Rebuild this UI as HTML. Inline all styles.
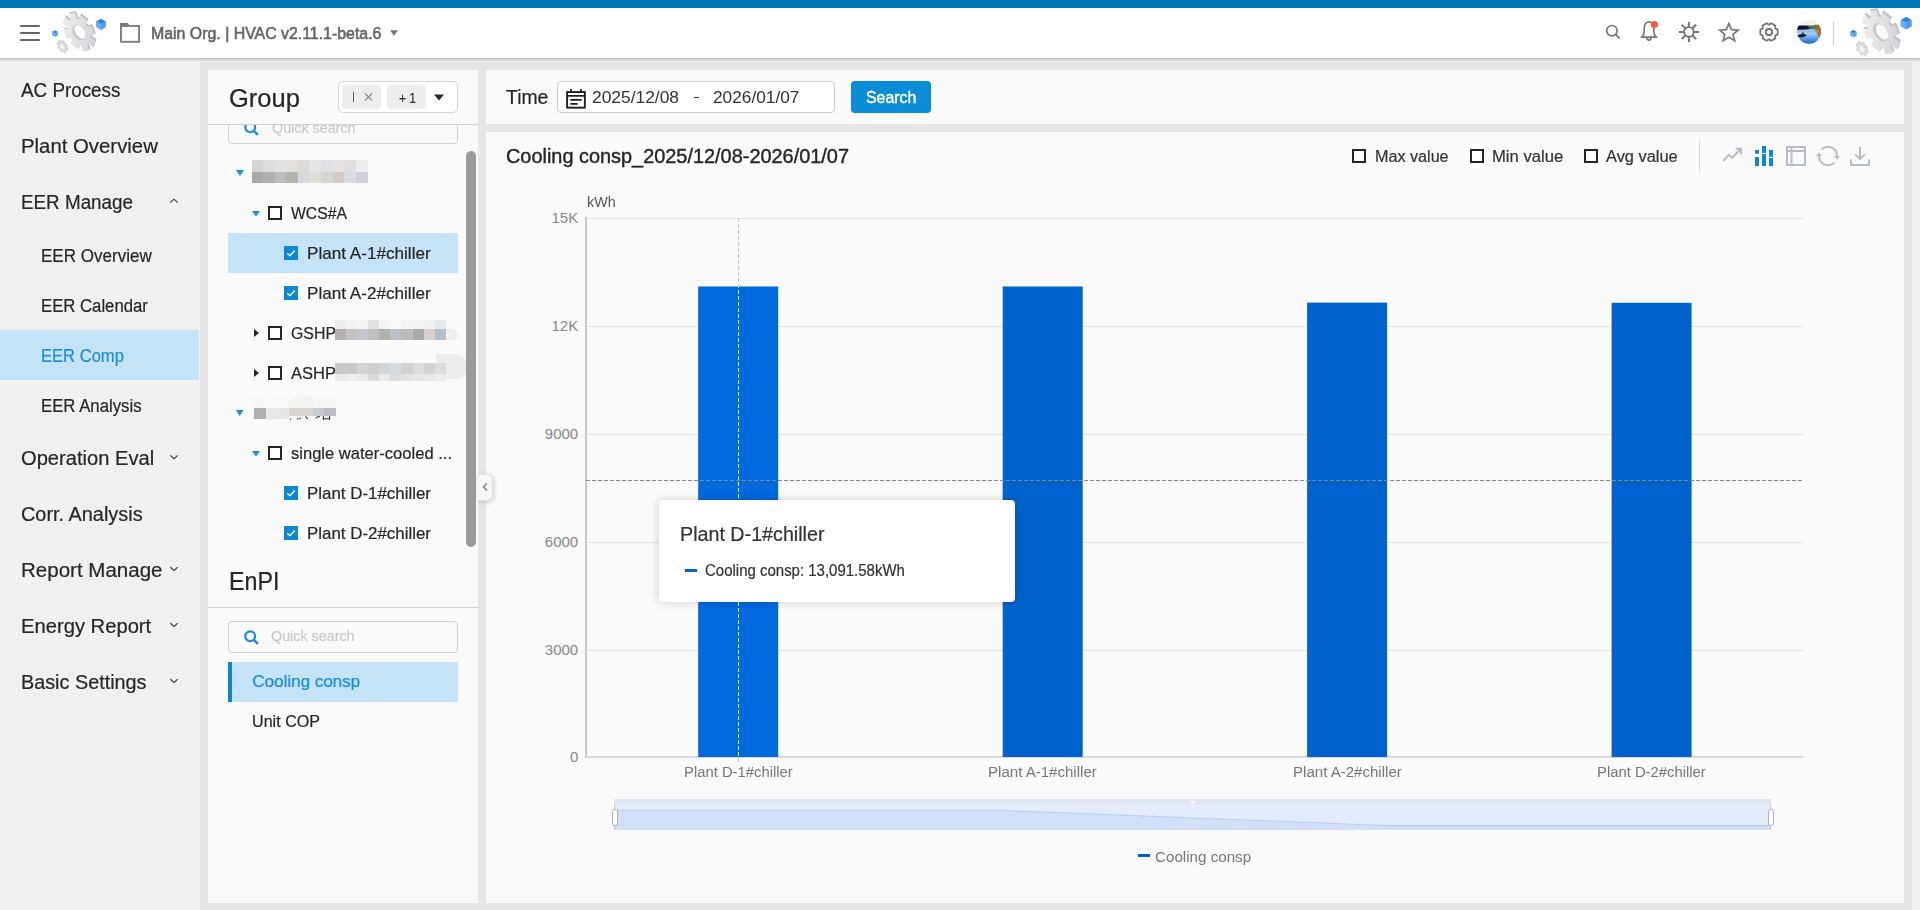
<!DOCTYPE html>
<html><head><meta charset="utf-8"><title>EER Comp</title>
<style>
html,body{margin:0;padding:0;width:1920px;height:910px;overflow:hidden;background:#e5e5e5;}
body{position:relative;font-family:"Liberation Sans",sans-serif;}
.t{position:absolute;white-space:nowrap;line-height:1;transform-origin:0 0;-webkit-text-stroke:0.2px currentColor;}
.r{position:absolute;}
svg.r{display:block;}
</style></head><body>
<div class="r" style="left:0px;top:0px;width:1920px;height:8px;background:#0077b7;"></div>
<div class="r" style="left:0px;top:8px;width:1920px;height:50px;background:#ffffff;"></div>
<div class="r" style="left:0px;top:58px;width:1920px;height:1px;background:#c2c2c2;"></div>
<div class="r" style="left:0px;top:59px;width:1920px;height:1px;background:#d2d2d2;"></div>
<div class="r" style="left:0px;top:60px;width:1920px;height:1px;background:#dbdbdb;"></div>
<div class="r" style="left:0px;top:61px;width:1920px;height:1px;background:#ebebeb;"></div>
<div class="r" style="left:20px;top:24.6px;width:20px;height:2.4px;background:#666666;border-radius:1.2px;"></div>
<div class="r" style="left:20px;top:31.6px;width:20px;height:2.4px;background:#666666;border-radius:1.2px;"></div>
<div class="r" style="left:20px;top:38.6px;width:20px;height:2.4px;background:#666666;border-radius:1.2px;"></div>
<svg class="r" style="left:52px;top:12px;width:54.00px;height:42.00px;overflow:visible" viewBox="0 0 54 42">
<defs>
<linearGradient id="gga" x1="0" y1="0" x2="0.8" y2="1"><stop offset="0" stop-color="#f1f1f1"/><stop offset="0.55" stop-color="#e2e2e4"/><stop offset="1" stop-color="#cdd0d4"/></linearGradient>
</defs>
<g transform="rotate(-33 27.0 20.2)">
<path d="M38.74,19.42 L42.58,20.61 L40.61,30.47 L37.01,28.08 L35.81,30.31 L37.99,35.36 L32.11,40.18 L30.65,34.54 L28.78,34.81 L28.02,40.77 L21.66,37.72 L23.20,32.13 L21.76,30.28 L18.51,33.65 L15.40,24.53 L19.04,22.26 L18.86,19.38 L15.02,18.19 L16.99,8.33 L20.59,10.72 L21.79,8.49 L19.61,3.44 L25.49,-1.38 L26.95,4.26 L28.82,3.99 L29.58,-1.97 L35.94,1.08 L34.40,6.67 L35.84,8.52 L39.09,5.15 L42.20,14.27 L38.56,16.54Z" fill="#b9c0c6"/>
<path d="M36.94,20.22 L40.78,21.41 L38.81,31.27 L35.21,28.88 L34.01,31.11 L36.19,36.16 L30.31,40.98 L28.85,35.34 L26.98,35.61 L26.22,41.57 L19.86,38.52 L21.40,32.93 L19.96,31.08 L16.71,34.45 L13.60,25.33 L17.24,23.06 L17.06,20.18 L13.22,18.99 L15.19,9.13 L18.79,11.52 L19.99,9.29 L17.81,4.24 L23.69,-0.58 L25.15,5.06 L27.02,4.79 L27.78,-1.17 L34.14,1.88 L32.60,7.47 L34.04,9.32 L37.29,5.95 L40.40,15.07 L36.76,17.34Z" fill="url(#gga)"/>
<ellipse cx="26.7" cy="20.2" rx="5.6" ry="8.6" fill="#c4c9ce"/>
<ellipse cx="27.9" cy="20.5" rx="4.4" ry="7.4" fill="#fbfbfb"/>
</g>
<g transform="rotate(-33 10.2 35.0)">
<path d="M14.40,34.33 L15.60,34.59 L15.21,37.53 L14.03,37.05 L13.57,38.09 L14.30,39.57 L12.66,41.23 L12.05,39.63 L11.24,39.87 L11.07,41.70 L9.14,41.10 L9.46,39.32 L8.77,38.61 L7.80,39.73 L6.71,37.23 L7.76,36.30 L7.60,35.07 L6.40,34.81 L6.79,31.87 L7.97,32.35 L8.43,31.31 L7.70,29.83 L9.34,28.17 L9.95,29.77 L10.76,29.53 L10.93,27.70 L12.86,28.30 L12.54,30.08 L13.23,30.79 L14.20,29.67 L15.29,32.17 L14.24,33.10Z" fill="#bcc0c5"/>
<path d="M13.60,34.63 L14.80,34.89 L14.41,37.83 L13.23,37.35 L12.77,38.39 L13.50,39.87 L11.86,41.53 L11.25,39.93 L10.44,40.17 L10.27,42.00 L8.34,41.40 L8.66,39.62 L7.97,38.91 L7.00,40.03 L5.91,37.53 L6.96,36.60 L6.80,35.37 L5.60,35.11 L5.99,32.17 L7.17,32.65 L7.63,31.61 L6.90,30.13 L8.54,28.47 L9.15,30.07 L9.96,29.83 L10.13,28.00 L12.06,28.60 L11.74,30.38 L12.43,31.09 L13.40,29.97 L14.49,32.47 L13.44,33.40Z" fill="#dcdcdf"/>
<ellipse cx="10.5" cy="35.0" rx="1.7" ry="2.9" fill="#f6f6f6"/>
</g>
<path d="M49.00,6.70 L53.85,9.50 L49.00,12.30 L44.15,9.50Z" fill="#2a86f2"/><path d="M44.15,9.50 L49.00,12.30 L49.00,17.90 L44.15,15.10Z" fill="#62a9f6"/><path d="M53.85,9.50 L49.00,12.30 L49.00,17.90 L53.85,15.10Z" fill="#4a9af4"/>
<path d="M3.00,18.20 L5.86,19.85 L3.00,21.50 L0.14,19.85Z" fill="#2a86f2"/><path d="M0.14,19.85 L3.00,21.50 L3.00,24.80 L0.14,23.15Z" fill="#62a9f6"/><path d="M5.86,19.85 L3.00,21.50 L3.00,24.80 L5.86,23.15Z" fill="#4a9af4"/>
</svg>
<svg class="r" style="left:118px;top:21px;width:24px;height:24px" viewBox="0 0 24 24"><rect x="2.95" y="4.95" width="18.1" height="15.85" fill="none" stroke="#7c7c7c" stroke-width="1.9"/><path d="M2,2.1 H9.7 L11.6,4.2 H2z" fill="#7c7c7c"/></svg><div class="t" style="left:150.60px;top:25.31px;font-size:17px;color:#666666;transform:scaleX(0.9342);-webkit-text-stroke:0.6px #666;">Main Org. | HVAC v2.11.1-beta.6</div>
<svg class="r" style="left:389px;top:29px;width:10px;height:8px" viewBox="0 0 10 8"><path d="M1,1.2 h8 l-4,5.6z" fill="#777"/></svg>
<svg class="r" style="left:1600px;top:18px;width:240px;height:30px" viewBox="1600 18 240 30">
<g fill="none" stroke="#777777" stroke-width="1.7">
<circle cx="1611.9" cy="30.7" r="5.2"/><path d="M1615.6,34.4 L1619.8,38.6"/>
<path d="M1642,37.1 h14 c-1.6,-1.8 -2.1,-3.3 -2.2,-5.6 v-3.6 c0,-3.6 -2.4,-6 -4.8,-6 c-2.4,0 -4.8,2.4 -4.8,6 v3.6 c0,2.3 -0.6,3.8 -2.2,5.6z"/>
<path d="M1646.7,37.3 c0.3,2 1.2,2.8 2.3,2.8 c1.1,0 2,-0.8 2.3,-2.8"/>
<circle cx="1688.9" cy="31.9" r="4.8" stroke-width="1.9"/>
<path d="M1694.10,31.90 L1699.10,31.90 M1692.58,35.58 L1696.11,39.11 M1688.90,37.10 L1688.90,42.10 M1685.22,35.58 L1681.69,39.11 M1683.70,31.90 L1678.70,31.90 M1685.22,28.22 L1681.69,24.69 M1688.90,26.70 L1688.90,21.70 M1692.58,28.22 L1696.11,24.69" stroke-width="2"/>
<path d="M1728.9,23.6 l2.6,6.1 l6.6,0.4 l-5.1,4.3 l1.7,6.4 l-5.8,-3.5 l-5.8,3.5 l1.7,-6.4 l-5.1,-4.3 l6.6,-0.4z" stroke-linejoin="miter"/>
<circle cx="1768.9" cy="32" r="3.1"/>
</g>
<circle cx="1654.4" cy="24.5" r="3.6" fill="#f25c3c"/>
<path d="M1833.5,21 v24" stroke="#cfcfcf" stroke-width="1.2"/>
</svg>
<svg class="r" style="left:1750px;top:14px;width:40px;height:40px" viewBox="1750 14 40 40"><path d="M1775.59,28.64 L1777.69,29.67 L1777.69,34.33 L1775.59,35.36 L1775.21,36.03 L1775.36,38.36 L1771.33,40.69 L1769.39,39.39 L1768.61,39.39 L1766.67,40.69 L1762.64,38.36 L1762.79,36.03 L1762.41,35.36 L1760.31,34.33 L1760.31,29.67 L1762.41,28.64 L1762.79,27.97 L1762.64,25.64 L1766.67,23.31 L1768.61,24.61 L1769.39,24.61 L1771.33,23.31 L1775.36,25.64 L1775.21,27.97Z" fill="none" stroke="#777777" stroke-width="1.8" stroke-linejoin="round"/><circle cx="1769" cy="32" r="3.1" fill="none" stroke="#777777" stroke-width="1.8"/></svg>
<svg class="r" style="left:1797px;top:20px;width:24px;height:24px" viewBox="0 0 24 24">
<defs><clipPath id="av"><circle cx="12" cy="11.8" r="12"/></clipPath>
<linearGradient id="wat" x1="0" y1="0" x2="0" y2="1"><stop offset="0" stop-color="#7fb0ee"/><stop offset="0.35" stop-color="#a9cbf5"/><stop offset="0.7" stop-color="#4f94e6"/><stop offset="1" stop-color="#0b5fc6"/></linearGradient></defs>
<g clip-path="url(#av)">
<rect x="0" y="0" width="24" height="24" fill="#f2f2f2"/>
<rect x="0" y="8" width="24" height="16" fill="url(#wat)"/>
<path d="M0,5.6 H11 L13,8.8 L9,9.6 L0,9.8z" fill="#161616"/>
<path d="M10,5.4 H18 V8.6 L13,9 z" fill="#4f6b3d"/>
<path d="M17,4.8 H24 V17.5 L21.5,16.5 L19.5,12.5 L18,9z" fill="#7d7a34"/>
<circle cx="20.2" cy="11.2" r="1.7" fill="#d08a25"/>
<circle cx="22.6" cy="14" r="1.4" fill="#c47a22"/>
<circle cx="19.2" cy="7.6" r="1.5" fill="#5a7530"/>
<path d="M0,15.8 L3,14.6 L5.2,13.6 L7.6,14 L9.8,15.6 L7.6,16.6 L5,17.6 L2,17z" fill="#1b1b1b"/>
<circle cx="6" cy="13" r="0.9" fill="#3d4d52"/>
</g></svg>
<svg class="r" style="left:1850px;top:9px;width:61.88px;height:48.13px;overflow:visible" viewBox="0 0 54 42">
<defs>
<linearGradient id="ggb" x1="0" y1="0" x2="0.8" y2="1"><stop offset="0" stop-color="#f1f1f1"/><stop offset="0.55" stop-color="#e2e2e4"/><stop offset="1" stop-color="#cdd0d4"/></linearGradient>
</defs>
<g transform="rotate(-33 27.0 20.2)">
<path d="M38.74,19.42 L42.58,20.61 L40.61,30.47 L37.01,28.08 L35.81,30.31 L37.99,35.36 L32.11,40.18 L30.65,34.54 L28.78,34.81 L28.02,40.77 L21.66,37.72 L23.20,32.13 L21.76,30.28 L18.51,33.65 L15.40,24.53 L19.04,22.26 L18.86,19.38 L15.02,18.19 L16.99,8.33 L20.59,10.72 L21.79,8.49 L19.61,3.44 L25.49,-1.38 L26.95,4.26 L28.82,3.99 L29.58,-1.97 L35.94,1.08 L34.40,6.67 L35.84,8.52 L39.09,5.15 L42.20,14.27 L38.56,16.54Z" fill="#b9c0c6"/>
<path d="M36.94,20.22 L40.78,21.41 L38.81,31.27 L35.21,28.88 L34.01,31.11 L36.19,36.16 L30.31,40.98 L28.85,35.34 L26.98,35.61 L26.22,41.57 L19.86,38.52 L21.40,32.93 L19.96,31.08 L16.71,34.45 L13.60,25.33 L17.24,23.06 L17.06,20.18 L13.22,18.99 L15.19,9.13 L18.79,11.52 L19.99,9.29 L17.81,4.24 L23.69,-0.58 L25.15,5.06 L27.02,4.79 L27.78,-1.17 L34.14,1.88 L32.60,7.47 L34.04,9.32 L37.29,5.95 L40.40,15.07 L36.76,17.34Z" fill="url(#ggb)"/>
<ellipse cx="26.7" cy="20.2" rx="5.6" ry="8.6" fill="#c4c9ce"/>
<ellipse cx="27.9" cy="20.5" rx="4.4" ry="7.4" fill="#fbfbfb"/>
</g>
<g transform="rotate(-33 10.2 35.0)">
<path d="M14.40,34.33 L15.60,34.59 L15.21,37.53 L14.03,37.05 L13.57,38.09 L14.30,39.57 L12.66,41.23 L12.05,39.63 L11.24,39.87 L11.07,41.70 L9.14,41.10 L9.46,39.32 L8.77,38.61 L7.80,39.73 L6.71,37.23 L7.76,36.30 L7.60,35.07 L6.40,34.81 L6.79,31.87 L7.97,32.35 L8.43,31.31 L7.70,29.83 L9.34,28.17 L9.95,29.77 L10.76,29.53 L10.93,27.70 L12.86,28.30 L12.54,30.08 L13.23,30.79 L14.20,29.67 L15.29,32.17 L14.24,33.10Z" fill="#bcc0c5"/>
<path d="M13.60,34.63 L14.80,34.89 L14.41,37.83 L13.23,37.35 L12.77,38.39 L13.50,39.87 L11.86,41.53 L11.25,39.93 L10.44,40.17 L10.27,42.00 L8.34,41.40 L8.66,39.62 L7.97,38.91 L7.00,40.03 L5.91,37.53 L6.96,36.60 L6.80,35.37 L5.60,35.11 L5.99,32.17 L7.17,32.65 L7.63,31.61 L6.90,30.13 L8.54,28.47 L9.15,30.07 L9.96,29.83 L10.13,28.00 L12.06,28.60 L11.74,30.38 L12.43,31.09 L13.40,29.97 L14.49,32.47 L13.44,33.40Z" fill="#dcdcdf"/>
<ellipse cx="10.5" cy="35.0" rx="1.7" ry="2.9" fill="#f6f6f6"/>
</g>
<path d="M49.00,6.70 L53.85,9.50 L49.00,12.30 L44.15,9.50Z" fill="#2a86f2"/><path d="M44.15,9.50 L49.00,12.30 L49.00,17.90 L44.15,15.10Z" fill="#62a9f6"/><path d="M53.85,9.50 L49.00,12.30 L49.00,17.90 L53.85,15.10Z" fill="#4a9af4"/>
<path d="M3.00,18.20 L5.86,19.85 L3.00,21.50 L0.14,19.85Z" fill="#2a86f2"/><path d="M0.14,19.85 L3.00,21.50 L3.00,24.80 L0.14,23.15Z" fill="#62a9f6"/><path d="M5.86,19.85 L3.00,21.50 L3.00,24.80 L5.86,23.15Z" fill="#4a9af4"/>
</svg>
<div class="r" style="left:0px;top:62px;width:200px;height:848px;background:#f0f0f0;"></div>
<div class="r" style="left:200px;top:62px;width:1712px;height:848px;background:#e5e5e5;"></div>
<div class="r" style="left:1912px;top:62px;width:8px;height:848px;background:#efefef;"></div>
<div class="r" style="left:208px;top:70px;width:270px;height:833px;background:#fafafa;"></div>
<div class="r" style="left:486px;top:70px;width:1418px;height:54px;background:#fafafa;"></div>
<div class="r" style="left:486px;top:132px;width:1418px;height:771px;background:#fafafa;"></div>
<div class="r" style="left:0px;top:330px;width:199px;height:50px;background:#c4e3f7;"></div>
<div class="t" style="left:20.60px;top:80.07px;font-size:20px;color:#262626;transform:scaleX(0.9413);">AC Process</div>
<div class="t" style="left:20.60px;top:135.67px;font-size:20px;color:#262626;transform:scaleX(1.0175);">Plant Overview</div>
<div class="t" style="left:20.60px;top:192.07px;font-size:20px;color:#262626;transform:scaleX(0.9416);">EER Manage</div>
<svg class="r" style="left:0;top:0;width:200px;height:910px;overflow:visible" viewBox="0 0 200 910"><path d="M170.3,202.6 L174,199.2 L177.8,202.6" fill="none" stroke="#333" stroke-width="1.05"/></svg>
<div class="t" style="left:40.70px;top:247.36px;font-size:18px;color:#262626;transform:scaleX(0.9471);">EER Overview</div>
<div class="t" style="left:40.70px;top:296.76px;font-size:18px;color:#262626;transform:scaleX(0.9290);">EER Calendar</div>
<div class="t" style="left:40.70px;top:346.76px;font-size:18px;color:#1a8cd8;transform:scaleX(0.9207);">EER Comp</div>
<div class="t" style="left:40.70px;top:396.96px;font-size:18px;color:#262626;transform:scaleX(0.9302);">EER Analysis</div>
<div class="t" style="left:20.60px;top:448.07px;font-size:20px;color:#262626;transform:scaleX(1.0068);">Operation Eval</div>
<svg class="r" style="left:0;top:0;width:200px;height:910px;overflow:visible" viewBox="0 0 200 910"><path d="M170.3,455.3 L174,458.7 L177.7,455.3" fill="none" stroke="#333" stroke-width="1.05"/></svg>
<div class="t" style="left:20.60px;top:503.87px;font-size:20px;color:#262626;transform:scaleX(0.9947);">Corr. Analysis</div>
<div class="t" style="left:20.60px;top:559.87px;font-size:20px;color:#262626;transform:scaleX(1.0265);">Report Manage</div>
<svg class="r" style="left:0;top:0;width:200px;height:910px;overflow:visible" viewBox="0 0 200 910"><path d="M170.3,567.1 L174,570.5 L177.7,567.1" fill="none" stroke="#333" stroke-width="1.05"/></svg>
<div class="t" style="left:20.60px;top:615.87px;font-size:20px;color:#262626;transform:scaleX(1.0097);">Energy Report</div>
<svg class="r" style="left:0;top:0;width:200px;height:910px;overflow:visible" viewBox="0 0 200 910"><path d="M170.3,623.1 L174,626.5 L177.7,623.1" fill="none" stroke="#333" stroke-width="1.05"/></svg>
<div class="t" style="left:20.60px;top:671.87px;font-size:20px;color:#262626;transform:scaleX(0.9901);">Basic Settings</div>
<svg class="r" style="left:0;top:0;width:200px;height:910px;overflow:visible" viewBox="0 0 200 910"><path d="M170.3,679.1 L174,682.5 L177.7,679.1" fill="none" stroke="#333" stroke-width="1.05"/></svg>
<div class="t" style="left:229.00px;top:85.84px;font-size:25px;color:#262626;transform:scaleX(1.0216);">Group</div>
<div class="r" style="left:338px;top:81px;width:120px;height:32px;background:#ffffff;border:1px solid #d4d4d4;border-radius:5px;box-sizing:border-box;"></div>
<div class="r" style="left:342px;top:85px;width:39px;height:24px;background:#ededed;border-radius:4px;"></div>
<div class="r" style="left:387px;top:85px;width:39px;height:24px;background:#ededed;border-radius:4px;"></div>
<div class="r" style="left:353px;top:91.5px;width:1.3px;height:10px;background:#555;"></div>
<svg class="r" style="left:360.5px;top:90px;width:14px;height:14px" viewBox="0 0 14 14"><path d="M4,3.5 L11,10.5 M11,3.5 L4,10.5" stroke="#888" stroke-width="1.1"/></svg>
<div class="t" style="left:398.50px;top:89.90px;font-size:15px;color:#333;transform:scaleX(0.7995);">+ 1</div>
<svg class="r" style="left:432px;top:92px;width:14px;height:10px" viewBox="0 0 14 10"><path d="M2,2.6 h10 l-5,6z" fill="#2a2a2a"/></svg>
<div class="r" style="left:208px;top:124px;width:270px;height:1px;background:#d0d0d0;"></div>
<div class="r" style="left:208px;top:125px;width:270px;height:428px;overflow:hidden">
<div class="r" style="left:20px;top:-13px;width:230px;height:32px;background:transparent;border:1px solid #cfcfcf;border-radius:4px;box-sizing:border-box;"></div>
<svg class="r" style="left:35px;top:-5.5px;width:18px;height:18px" viewBox="0 0 18 18"><circle cx="7.2" cy="7.2" r="4.9" fill="none" stroke="#1a8cd8" stroke-width="2.2"/><path d="M10.8,10.8 L14.8,14.8" stroke="#1a8cd8" stroke-width="2.4"/></svg>
<div class="t" style="left:63.70px;top:-4.70px;font-size:15px;color:#c8c8c8;transform:scaleX(0.9540);">Quick search</div>
<div class="r" style="left:20px;top:108px;width:230px;height:40px;background:#c4e3f7;"></div>
<svg class="r" style="left:28px;top:45px;width:8px;height:6px" viewBox="0 0 8 6"><path d="M0,0 H8 L4.0,6z" fill="#1a8cd8"/></svg>
<div class="r" style="left:43.5px;top:35px;width:11.9px;height:11.8px;background:#d4d4d4;filter:blur(0.3px);"></div>
<div class="r" style="left:55.1px;top:35px;width:11.9px;height:11.8px;background:#dcdcdc;filter:blur(0.3px);"></div>
<div class="r" style="left:66.7px;top:35px;width:11.9px;height:11.8px;background:#e0e0e0;filter:blur(0.3px);"></div>
<div class="r" style="left:78.3px;top:35px;width:11.9px;height:11.8px;background:#e2dfdd;filter:blur(0.3px);"></div>
<div class="r" style="left:89.9px;top:35px;width:11.9px;height:11.8px;background:#dddbda;filter:blur(0.3px);"></div>
<div class="r" style="left:101.5px;top:35px;width:11.9px;height:11.8px;background:#e4e5e5;filter:blur(0.3px);"></div>
<div class="r" style="left:113.1px;top:35px;width:11.9px;height:11.8px;background:#e0e0e2;filter:blur(0.3px);"></div>
<div class="r" style="left:124.7px;top:35px;width:11.9px;height:11.8px;background:#e5e2df;filter:blur(0.3px);"></div>
<div class="r" style="left:136.3px;top:35px;width:11.9px;height:11.8px;background:#e0dedf;filter:blur(0.3px);"></div>
<div class="r" style="left:147.9px;top:35px;width:11.9px;height:11.8px;background:#ebeeef;filter:blur(0.3px);"></div>
<div class="r" style="left:43.5px;top:46.5px;width:11.9px;height:11.8px;background:#a9a9a9;filter:blur(0.3px);"></div>
<div class="r" style="left:55.1px;top:46.5px;width:11.9px;height:11.8px;background:#b1b1b1;filter:blur(0.3px);"></div>
<div class="r" style="left:66.7px;top:46.5px;width:11.9px;height:11.8px;background:#bebdbd;filter:blur(0.3px);"></div>
<div class="r" style="left:78.3px;top:46.5px;width:11.9px;height:11.8px;background:#b2b4b0;filter:blur(0.3px);"></div>
<div class="r" style="left:89.9px;top:46.5px;width:11.9px;height:11.8px;background:#d6d8db;filter:blur(0.3px);"></div>
<div class="r" style="left:101.5px;top:46.5px;width:11.9px;height:11.8px;background:#e1ded8;filter:blur(0.3px);"></div>
<div class="r" style="left:113.1px;top:46.5px;width:11.9px;height:11.8px;background:#d3d6d3;filter:blur(0.3px);"></div>
<div class="r" style="left:124.7px;top:46.5px;width:11.9px;height:11.8px;background:#d3ccc6;filter:blur(0.3px);"></div>
<div class="r" style="left:136.3px;top:46.5px;width:11.9px;height:11.8px;background:#d8dadd;filter:blur(0.3px);"></div>
<div class="r" style="left:147.9px;top:46.5px;width:11.9px;height:11.8px;background:#cfd0d5;filter:blur(0.3px);"></div>
<svg class="r" style="left:44px;top:85.5px;width:8px;height:5.5px" viewBox="0 0 8 5.5"><path d="M0,0 H8 L4.0,5.5z" fill="#1a8cd8"/></svg>
<div class="r" style="left:60px;top:81px;width:14px;height:14px;background:#ffffff;border:2px solid #262626;box-sizing:border-box;"></div>
<div class="t" style="left:82.50px;top:79.81px;font-size:17px;color:#262626;transform:scaleX(0.9260);">WCS#A</div>
<div class="r" style="left:76px;top:121px;width:14px;height:14px;background:#0a88d6;"></div>
<svg class="r" style="left:76px;top:121px;width:14px;height:14px" viewBox="0 0 14 14"><path d="M3.3,7.2 L6,9.8 L10.8,4.6" fill="none" stroke="#fff" stroke-width="1.5"/></svg>
<div class="t" style="left:98.80px;top:119.91px;font-size:17px;color:#262626;transform:scaleX(1.0068);">Plant A-1#chiller</div>
<div class="r" style="left:76px;top:161px;width:14px;height:14px;background:#0a88d6;"></div>
<svg class="r" style="left:76px;top:161px;width:14px;height:14px" viewBox="0 0 14 14"><path d="M3.3,7.2 L6,9.8 L10.8,4.6" fill="none" stroke="#fff" stroke-width="1.5"/></svg>
<div class="t" style="left:98.80px;top:159.91px;font-size:17px;color:#262626;transform:scaleX(1.0068);">Plant A-2#chiller</div>
<svg class="r" style="left:46px;top:204px;width:5px;height:8px" viewBox="0 0 5 8"><path d="M0,0 L5,4.0 L0,8z" fill="#262626"/></svg>
<div class="r" style="left:60px;top:201px;width:14px;height:14px;background:#ffffff;border:2px solid #262626;box-sizing:border-box;"></div>
<div class="t" style="left:82.50px;top:199.91px;font-size:17px;color:#262626;transform:scaleX(0.9337);">GSHP</div>
<div class="r" style="left:126.8px;top:194.6px;width:11.4px;height:9.4px;background:#ececee;filter:blur(0.3px);"></div>
<div class="r" style="left:137.9px;top:194.6px;width:11.4px;height:9.4px;background:#f2f2f2;filter:blur(0.3px);"></div>
<div class="r" style="left:149.0px;top:194.6px;width:11.4px;height:9.4px;background:#f5f5f5;filter:blur(0.3px);"></div>
<div class="r" style="left:160.1px;top:194.6px;width:11.4px;height:9.4px;background:#e0e0e0;filter:blur(0.3px);"></div>
<div class="r" style="left:171.2px;top:194.6px;width:11.4px;height:9.4px;background:#f5f5f5;filter:blur(0.3px);"></div>
<div class="r" style="left:182.3px;top:194.6px;width:11.4px;height:9.4px;background:#f8f8f6;filter:blur(0.3px);"></div>
<div class="r" style="left:193.4px;top:194.6px;width:11.4px;height:9.4px;background:#f3f3f3;filter:blur(0.3px);"></div>
<div class="r" style="left:204.5px;top:194.6px;width:11.4px;height:9.4px;background:#f3f3f3;filter:blur(0.3px);"></div>
<div class="r" style="left:215.6px;top:194.6px;width:11.4px;height:9.4px;background:#efefed;filter:blur(0.3px);"></div>
<div class="r" style="left:226.7px;top:194.6px;width:11.4px;height:9.4px;background:#e6e9ed;filter:blur(0.3px);"></div>
<div class="r" style="left:126.8px;top:203.7px;width:11.4px;height:11.3px;background:#b5b0b3;filter:blur(0.3px);"></div>
<div class="r" style="left:137.9px;top:203.7px;width:11.4px;height:11.3px;background:#c4c3c1;filter:blur(0.3px);"></div>
<div class="r" style="left:149.0px;top:203.7px;width:11.4px;height:11.3px;background:#c3c6ca;filter:blur(0.3px);"></div>
<div class="r" style="left:160.1px;top:203.7px;width:11.4px;height:11.3px;background:#bfbec0;filter:blur(0.3px);"></div>
<div class="r" style="left:171.2px;top:203.7px;width:11.4px;height:11.3px;background:#b0b0ad;filter:blur(0.3px);"></div>
<div class="r" style="left:182.3px;top:203.7px;width:11.4px;height:11.3px;background:#bdc0c5;filter:blur(0.3px);"></div>
<div class="r" style="left:193.4px;top:203.7px;width:11.4px;height:11.3px;background:#bdbcbb;filter:blur(0.3px);"></div>
<div class="r" style="left:204.5px;top:203.7px;width:11.4px;height:11.3px;background:#a9a9aa;filter:blur(0.3px);"></div>
<div class="r" style="left:215.6px;top:203.7px;width:11.4px;height:11.3px;background:#d5d0cc;filter:blur(0.3px);"></div>
<div class="r" style="left:226.7px;top:203.7px;width:11.4px;height:11.3px;background:#b5bfcc;filter:blur(0.3px);"></div>
<div class="r" style="left:238px;top:203.7px;width:12px;height:11px;background:#efeeec;border-radius:0 6px 6px 0;"></div>
<svg class="r" style="left:46px;top:244px;width:5px;height:8px" viewBox="0 0 5 8"><path d="M0,0 L5,4.0 L0,8z" fill="#262626"/></svg>
<div class="r" style="left:60px;top:241px;width:14px;height:14px;background:#ffffff;border:2px solid #262626;box-sizing:border-box;"></div>
<div class="t" style="left:82.50px;top:239.91px;font-size:17px;color:#262626;transform:scaleX(0.9723);">ASHP</div>
<div class="r" style="left:228px;top:229px;width:32px;height:25px;background:#ededed;border-radius:0 14px 12px 0;"></div>
<div class="r" style="left:126.8px;top:238.2px;width:11.4px;height:10.7px;background:#ccc8c8;filter:blur(0.3px);"></div>
<div class="r" style="left:137.9px;top:238.2px;width:11.4px;height:10.7px;background:#c9c9c9;filter:blur(0.3px);"></div>
<div class="r" style="left:149.0px;top:238.2px;width:11.4px;height:10.7px;background:#d3d3d3;filter:blur(0.3px);"></div>
<div class="r" style="left:160.1px;top:238.2px;width:11.4px;height:10.7px;background:#cfcecc;filter:blur(0.3px);"></div>
<div class="r" style="left:171.2px;top:238.2px;width:11.4px;height:10.7px;background:#d3d5d7;filter:blur(0.3px);"></div>
<div class="r" style="left:182.3px;top:238.2px;width:11.4px;height:10.7px;background:#d6dbdf;filter:blur(0.3px);"></div>
<div class="r" style="left:193.4px;top:238.2px;width:11.4px;height:10.7px;background:#cfd1d3;filter:blur(0.3px);"></div>
<div class="r" style="left:204.5px;top:238.2px;width:11.4px;height:10.7px;background:#dcdcdc;filter:blur(0.3px);"></div>
<div class="r" style="left:215.6px;top:238.2px;width:11.4px;height:10.7px;background:#d5d1ce;filter:blur(0.3px);"></div>
<div class="r" style="left:226.7px;top:238.2px;width:11.4px;height:10.7px;background:#dcdde0;filter:blur(0.3px);"></div>
<div class="r" style="left:126.8px;top:248.6px;width:11.4px;height:7.7px;background:#e9eaea;filter:blur(0.3px);"></div>
<div class="r" style="left:137.9px;top:248.6px;width:11.4px;height:7.7px;background:#eef0f0;filter:blur(0.3px);"></div>
<div class="r" style="left:149.0px;top:248.6px;width:11.4px;height:7.7px;background:#eceae6;filter:blur(0.3px);"></div>
<div class="r" style="left:160.1px;top:248.6px;width:11.4px;height:7.7px;background:#d7dadd;filter:blur(0.3px);"></div>
<div class="r" style="left:171.2px;top:248.6px;width:11.4px;height:7.7px;background:#ebeae7;filter:blur(0.3px);"></div>
<div class="r" style="left:182.3px;top:248.6px;width:11.4px;height:7.7px;background:#dcdcdc;filter:blur(0.3px);"></div>
<div class="r" style="left:193.4px;top:248.6px;width:11.4px;height:7.7px;background:#e2e2e2;filter:blur(0.3px);"></div>
<div class="r" style="left:204.5px;top:248.6px;width:11.4px;height:7.7px;background:#e6e6e6;filter:blur(0.3px);"></div>
<div class="r" style="left:215.6px;top:248.6px;width:11.4px;height:7.7px;background:#e8e8e8;filter:blur(0.3px);"></div>
<div class="r" style="left:226.7px;top:248.6px;width:11.4px;height:7.7px;background:#ececec;filter:blur(0.3px);"></div>
<svg class="r" style="left:28px;top:285px;width:7.5px;height:6px" viewBox="0 0 7.5 6"><path d="M0,0 H7.5 L3.75,6z" fill="#1a8cd8"/></svg>
<div class="r" style="left:46.0px;top:271.4px;width:12.0px;height:11.9px;background:#f7f7f5;filter:blur(0.3px);"></div>
<div class="r" style="left:57.7px;top:271.4px;width:12.0px;height:11.9px;background:#f9f9f9;filter:blur(0.3px);"></div>
<div class="r" style="left:69.4px;top:271.4px;width:12.0px;height:11.9px;background:#f9f9f9;filter:blur(0.3px);"></div>
<div class="r" style="left:81.1px;top:271.4px;width:12.0px;height:11.9px;background:#f6f5f1;filter:blur(0.3px);"></div>
<div class="r" style="left:92.8px;top:271.4px;width:12.0px;height:11.9px;background:#f3f3f3;filter:blur(0.3px);"></div>
<div class="r" style="left:104.5px;top:271.4px;width:12.0px;height:11.9px;background:#f5f6f6;filter:blur(0.3px);"></div>
<div class="r" style="left:116.2px;top:271.4px;width:12.0px;height:11.9px;background:#f5f6f6;filter:blur(0.3px);"></div>
<div class="r" style="left:46.0px;top:283.0px;width:12.0px;height:8.0px;background:#aeaeb3;filter:blur(0.3px);"></div>
<div class="r" style="left:57.7px;top:283.0px;width:12.0px;height:8.0px;background:#e8e8e8;filter:blur(0.3px);"></div>
<div class="r" style="left:69.4px;top:283.0px;width:12.0px;height:8.0px;background:#e6e6e6;filter:blur(0.3px);"></div>
<div class="r" style="left:81.1px;top:283.0px;width:12.0px;height:8.0px;background:#d8d4d0;filter:blur(0.3px);"></div>
<div class="r" style="left:92.8px;top:283.0px;width:12.0px;height:8.0px;background:#d8d4d0;filter:blur(0.3px);"></div>
<div class="r" style="left:104.5px;top:283.0px;width:12.0px;height:8.0px;background:#c8cbce;filter:blur(0.3px);"></div>
<div class="r" style="left:116.2px;top:283.0px;width:12.0px;height:8.0px;background:#bcbcc1;filter:blur(0.3px);"></div>
<div class="r" style="left:46px;top:290.7px;width:35px;height:3.1px;background:linear-gradient(90deg,#aeaeb3 0 11.7px,#e8e8e8 11.7px 23.4px,#e6e6e6 23.4px);"></div>
<svg class="r" style="left:80px;top:289px;width:46px;height:8px" viewBox="288 414 46 8"><g fill="none" stroke="#333" stroke-width="1.1"><path d="M290,419.4 l1.2,-0.6 M297,418.6 l1.5,0.6 M300.5,417.6 l-0.8,1.8 M305.5,416.3 l2.2,2.6 M316,418 l1.8,-1.2 l2,-0.2 M323.4,416 v4 M329.6,416 v4 M323.4,418.8 h6.2"/></g></svg>
<svg class="r" style="left:44px;top:325.5px;width:8px;height:5.5px" viewBox="0 0 8 5.5"><path d="M0,0 H8 L4.0,5.5z" fill="#1a8cd8"/></svg>
<div class="r" style="left:60px;top:321px;width:14px;height:14px;background:#ffffff;border:2px solid #262626;box-sizing:border-box;"></div>
<div class="t" style="left:82.50px;top:319.91px;font-size:17px;color:#262626;transform:scaleX(0.9736);">single water-cooled ...</div>
<div class="r" style="left:76px;top:361px;width:14px;height:14px;background:#0a88d6;"></div>
<svg class="r" style="left:76px;top:361px;width:14px;height:14px" viewBox="0 0 14 14"><path d="M3.3,7.2 L6,9.8 L10.8,4.6" fill="none" stroke="#fff" stroke-width="1.5"/></svg>
<div class="t" style="left:98.80px;top:359.91px;font-size:17px;color:#262626;transform:scaleX(0.9941);">Plant D-1#chiller</div>
<div class="r" style="left:76px;top:401px;width:14px;height:14px;background:#0a88d6;"></div>
<svg class="r" style="left:76px;top:401px;width:14px;height:14px" viewBox="0 0 14 14"><path d="M3.3,7.2 L6,9.8 L10.8,4.6" fill="none" stroke="#fff" stroke-width="1.5"/></svg>
<div class="t" style="left:98.80px;top:399.91px;font-size:17px;color:#262626;transform:scaleX(0.9941);">Plant D-2#chiller</div>
</div>
<div class="r" style="left:466.2px;top:151px;width:9.5px;height:396px;background:#9a9a9a;border-radius:5px;"></div>
<div class="t" style="left:229.40px;top:568.84px;font-size:25px;color:#262626;transform:scaleX(0.9319);">EnPI</div>
<div class="r" style="left:208px;top:607px;width:270px;height:1px;background:#d0d0d0;"></div>
<div class="r" style="left:228px;top:621px;width:230px;height:32px;background:transparent;border:1px solid #cfcfcf;border-radius:4px;box-sizing:border-box;"></div>
<svg class="r" style="left:243px;top:629px;width:18px;height:18px" viewBox="0 0 18 18"><circle cx="7.2" cy="7.2" r="4.9" fill="none" stroke="#1a8cd8" stroke-width="2.2"/><path d="M10.8,10.8 L14.8,14.8" stroke="#1a8cd8" stroke-width="2.4"/></svg>
<div class="t" style="left:271.20px;top:628.30px;font-size:15px;color:#c8c8c8;transform:scaleX(0.9540);">Quick search</div>
<div class="r" style="left:228px;top:662px;width:230px;height:40px;background:#c4e3f7;"></div>
<div class="r" style="left:228px;top:662px;width:4px;height:40px;background:#0a88d6;"></div>
<div class="t" style="left:252.30px;top:672.61px;font-size:17px;color:#1a8cd8;">Cooling consp</div>
<div class="t" style="left:252.30px;top:712.61px;font-size:17px;color:#262626;transform:scaleX(0.9487);">Unit COP</div>
<div class="r" style="left:478px;top:473.5px;width:15px;height:27px;background:#f7f7f7;border-radius:0 6px 6px 0;box-shadow:1px 1px 4px rgba(0,0,0,0.18);border:1px solid #e2e2e2;border-left:none;box-sizing:border-box;"></div>
<svg class="r" style="left:480px;top:481px;width:10px;height:12px" viewBox="0 0 10 12"><path d="M6.8,2.5 L3.5,6 L6.8,9.5" fill="none" stroke="#666" stroke-width="1.1"/></svg>
<div class="t" style="left:506.40px;top:87.07px;font-size:20px;color:#262626;transform:scaleX(0.9703);">Time</div>
<div class="r" style="left:557px;top:81px;width:278px;height:32px;background:#ffffff;border:1px solid #cccccc;border-radius:4px;box-sizing:border-box;"></div>
<svg class="r" style="left:564px;top:87px;width:24px;height:24px" viewBox="0 0 24 24"><rect x="3.1" y="5.05" width="17.75" height="15.6" fill="none" stroke="#1e1e1e" stroke-width="1.9"/><path d="M3.1,8.85 h17.75" stroke="#1e1e1e" stroke-width="1.7"/><path d="M7,2 v3 M17,2 v3" stroke="#1e1e1e" stroke-width="1.7"/><path d="M7,12.95 h10 M7,16.95 h6" stroke="#1e1e1e" stroke-width="1.7" stroke-linecap="round"/></svg><div class="t" style="left:592.00px;top:88.71px;font-size:17px;color:#333333;transform:scaleX(1.0225);-webkit-text-stroke:0;">2025/12/08</div>
<div class="r" style="left:694px;top:96.5px;width:4.5px;height:1.5px;background:#444;"></div>
<div class="t" style="left:713.00px;top:88.71px;font-size:17px;color:#333333;transform:scaleX(1.0155);-webkit-text-stroke:0;">2026/01/07</div>
<div class="r" style="left:851px;top:81px;width:80px;height:32px;background:#0a8cd6;border-radius:4px;"></div>
<div class="t" style="left:865.70px;top:88.81px;font-size:17px;color:#ffffff;transform:scaleX(0.9341);-webkit-text-stroke:0.45px #fff;">Search</div>
<div class="t" style="left:506.30px;top:146.07px;font-size:20px;color:#262626;transform:scaleX(0.9949);-webkit-text-stroke:0.4px #262626;">Cooling consp_2025/12/08-2026/01/07</div>
<div class="r" style="left:1352px;top:149px;width:14px;height:14px;background:#ffffff;border:2px solid #262626;box-sizing:border-box;"></div>
<div class="t" style="left:1375.20px;top:149.06px;font-size:16px;color:#333333;transform:scaleX(1.0093);">Max value</div>
<div class="r" style="left:1470px;top:149px;width:14px;height:14px;background:#ffffff;border:2px solid #262626;box-sizing:border-box;"></div>
<div class="t" style="left:1491.80px;top:149.06px;font-size:16px;color:#333333;transform:scaleX(1.0397);">Min value</div>
<div class="r" style="left:1584px;top:149px;width:14px;height:14px;background:#ffffff;border:2px solid #262626;box-sizing:border-box;"></div>
<div class="t" style="left:1606.40px;top:149.06px;font-size:16px;color:#333333;transform:scaleX(1.0234);">Avg value</div>
<div class="r" style="left:1698.8px;top:140px;width:1px;height:32px;background:#d9d9d9;"></div>
<svg class="r" style="left:1715px;top:140px;width:165px;height:32px" viewBox="1715 140 165 32">
<g fill="none" stroke="#b6bcc8" stroke-width="2">
<path d="M1723,160.8 L1729,154.8 L1732,157.8 L1740.5,149.2"/>
<path d="M1735.6,148.8 h5.4 v5.4" />
<rect x="1787" y="147" width="18" height="18"/>
<path d="M1787,151 h18 M1791.5,147 v18"/>
<path d="M1821.6,149.6 A9,9 0 0 1 1837,156.6 M1834.4,162.4 A9,9 0 0 1 1819,155.4"/>
<path d="M1860,147 v12 M1855.2,154.4 l4.8,4.8 l4.8,-4.8 M1851,159.6 v5.4 h18 v-5.4"/>
</g>
<path d="M1816,156 L1822,156 L1819,152.4z M1834,156 L1840,156 L1837,159.6z" fill="#b6bcc8"/>
<g fill="#0a88d6">
<rect x="1755" y="150" width="4" height="3.8"/><rect x="1755" y="157" width="4" height="9"/>
<rect x="1762" y="146" width="4" height="7"/><rect x="1762" y="154" width="4" height="12"/>
<rect x="1769" y="150" width="4" height="6.8"/><rect x="1769" y="158" width="4" height="8"/>
</g>
</svg>
<svg class="r" style="left:486px;top:132px;width:1418px;height:771px" viewBox="486 132 1418 771"><path d="M587,218.5 H1803" stroke="#e3e3e3" stroke-width="1"/><path d="M587,326.5 H1803" stroke="#e3e3e3" stroke-width="1"/><path d="M587,434.5 H1803" stroke="#e3e3e3" stroke-width="1"/><path d="M587,542.5 H1803" stroke="#e3e3e3" stroke-width="1"/><path d="M587,650.5 H1803" stroke="#e3e3e3" stroke-width="1"/><path d="M587,757 H1803" stroke="#d8d8d8" stroke-width="2"/><path d="M586,217 V758" stroke="#c2c2c2" stroke-width="1.8"/><rect x="698.2" y="286.5" width="80" height="470.5" fill="#0069dd"/><rect x="1002.7" y="286.5" width="80" height="470.5" fill="#0062cc"/><rect x="1307.1" y="302.6" width="80" height="454.4" fill="#0062cc"/><rect x="1611.6" y="302.8" width="80" height="454.2" fill="#0062cc"/><path d="M738.5,218 V762" stroke="#c4c8d0" stroke-width="1" stroke-dasharray="4,2"/><path d="M738.5,290 V757" stroke="#e6ebf5" stroke-width="1" stroke-dasharray="4,2"/><path d="M586,480.5 H1802" stroke="#888888" stroke-width="1" stroke-dasharray="4,2"/><rect x="614" y="799" width="1157" height="6.5" fill="#dfe4f1"/><rect x="614" y="805.5" width="1157" height="24.5" fill="#e4ebfa"/><path d="M614,810.3 L998.7,810.3 L1385,825.5 L1771,825.5 L1771,830 L614,830z" fill="#d2dff8"/><path d="M614,810.3 L998.7,810.3 L1385,825.5 L1771,825.5" fill="none" stroke="#b6cdf5" stroke-width="1"/><path d="M614.5,805 V830 M1770.5,805 V830" stroke="#bcc6da" stroke-width="1"/><rect x="612.5" y="809.5" width="5" height="16" rx="2.2" fill="#ffffff" stroke="#a7b3cc" stroke-width="1"/><rect x="1768.5" y="809.5" width="5" height="16" rx="2.2" fill="#ffffff" stroke="#a7b3cc" stroke-width="1"/><path d="M1190.5,800.5 v3.5 M1192.5,800.5 v3.5 M1194.5,800.5 v3.5" stroke="#ffffff" stroke-width="1"/><rect x="1138" y="854" width="12" height="3" fill="#0062cc"/></svg>
<div class="t" style="left:586.50px;top:194.30px;font-size:15px;color:#555555;transform:scaleX(0.9567);-webkit-text-stroke:0;">kWh</div>
<div class="t" style="left:551.50px;top:210.30px;font-size:15px;color:#888888;-webkit-text-stroke:0;">15K</div>
<div class="t" style="left:551.50px;top:318.30px;font-size:15px;color:#888888;-webkit-text-stroke:0;">12K</div>
<div class="t" style="left:544.83px;top:426.30px;font-size:15px;color:#888888;-webkit-text-stroke:0;">9000</div>
<div class="t" style="left:544.83px;top:534.30px;font-size:15px;color:#888888;-webkit-text-stroke:0;">6000</div>
<div class="t" style="left:544.83px;top:642.30px;font-size:15px;color:#888888;-webkit-text-stroke:0;">3000</div>
<div class="t" style="left:569.88px;top:748.90px;font-size:15px;color:#888888;-webkit-text-stroke:0;">0</div>
<div class="t" style="left:684.20px;top:764.28px;font-size:15.5px;color:#777777;transform:scaleX(0.9566);-webkit-text-stroke:0;">Plant D-1#chiller</div>
<div class="t" style="left:988.40px;top:764.28px;font-size:15.5px;color:#777777;transform:scaleX(0.9712);-webkit-text-stroke:0;">Plant A-1#chiller</div>
<div class="t" style="left:1292.80px;top:764.28px;font-size:15.5px;color:#777777;transform:scaleX(0.9712);-webkit-text-stroke:0;">Plant A-2#chiller</div>
<div class="t" style="left:1597.10px;top:764.28px;font-size:15.5px;color:#777777;transform:scaleX(0.9566);-webkit-text-stroke:0;">Plant D-2#chiller</div>
<div class="t" style="left:1155.40px;top:848.90px;font-size:15px;color:#777777;transform:scaleX(1.0109);-webkit-text-stroke:0;">Cooling consp</div>
<div class="r" style="left:659px;top:500px;width:356px;height:102px;background:#ffffff;border-radius:4px;box-shadow:0 0 10px rgba(0,0,0,0.18);"></div>
<div class="t" style="left:679.70px;top:524.79px;font-size:19.5px;color:#333333;transform:scaleX(1.0099);">Plant D-1#chiller</div>
<div class="r" style="left:685px;top:569px;width:12px;height:3px;background:#0062cc;"></div>
<div class="t" style="left:705.40px;top:562.76px;font-size:16px;color:#333333;transform:scaleX(0.9364);">Cooling consp: 13,091.58kWh</div>
</body></html>
